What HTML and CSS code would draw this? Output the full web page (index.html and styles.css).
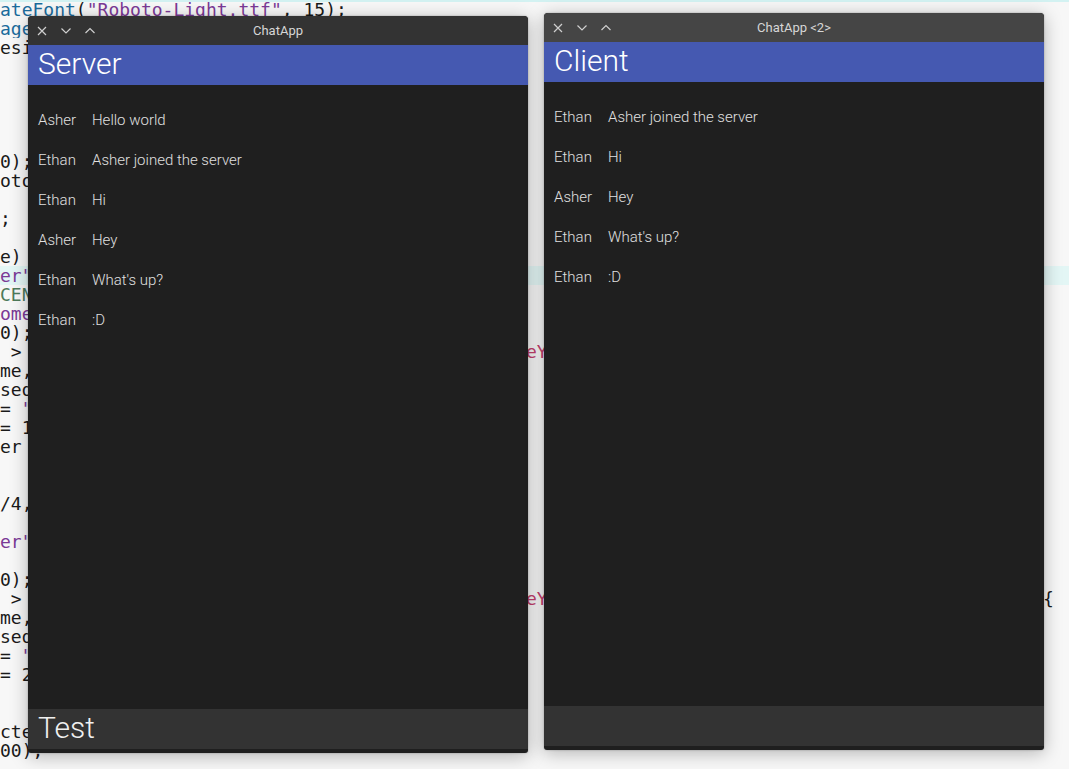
FILE: index.html
```html
<!DOCTYPE html>
<html lang="en">
<head>
<meta charset="utf-8">
<title>ChatApp</title>
<link rel="stylesheet" href="styles.css">
</head>
<body>
<div class="desktop">
  <div class="editor">
    <div class="ln"><span class="c1"><span class="fn">ateFont</span>(<span class="str">"Roboto-Light.ttf"</span>, 15);</span></div>
    <div class="ln"><span class="c1"><span class="fn">age</span>Mode(CORNER);</span></div>
    <div class="ln"><span class="c1">esign();</span></div>
    <div class="ln"></div>
    <div class="ln"></div>
    <div class="ln"></div>
    <div class="ln"></div>
    <div class="ln"></div>
    <div class="ln"><span class="c1">0);</span></div>
    <div class="ln"><span class="c1">oto</span></div>
    <div class="ln"></div>
    <div class="ln"><span class="c1">;</span></div>
    <div class="ln"></div>
    <div class="ln"><span class="c1">e)</span></div>
    <div class="ln hl"><span class="c1"><span class="str">er"</span></span></div>
    <div class="ln"><span class="c1"><span class="cst">CEN</span></span></div>
    <div class="ln"><span class="c1"><span class="str">ome</span></span></div>
    <div class="ln"><span class="c1">0);</span></div>
    <div class="ln"><span class="c1"> &gt;</span><span class="c2"><span class="pk">eY</span></span></div>
    <div class="ln"><span class="c1">me,</span></div>
    <div class="ln"><span class="c1">sed</span></div>
    <div class="ln"><span class="c1">= <span class="str">"</span></span></div>
    <div class="ln"><span class="c1">= 1</span></div>
    <div class="ln"><span class="c1">er</span></div>
    <div class="ln"></div>
    <div class="ln"></div>
    <div class="ln"><span class="c1">/4,</span></div>
    <div class="ln"></div>
    <div class="ln"><span class="c1"><span class="str">er"</span></span></div>
    <div class="ln"></div>
    <div class="ln"><span class="c1">0);</span></div>
    <div class="ln"><span class="c1"> &gt;</span><span class="c2"><span class="pk">eY</span></span><span class="c3">{</span></div>
    <div class="ln"><span class="c1">me,</span></div>
    <div class="ln"><span class="c1">sed</span></div>
    <div class="ln"><span class="c1">= <span class="str">"</span></span></div>
    <div class="ln"><span class="c1">= 2</span></div>
    <div class="ln"></div>
    <div class="ln"></div>
    <div class="ln"><span class="c1">cte</span></div>
    <div class="ln"><span class="c1">00),</span></div>
  </div>

  <section class="window win-server">
    <div class="titlebar">
      <div class="controls">
        <svg class="ico" viewBox="0 0 10 10"><path d="M1 1 L9 9 M9 1 L1 9"/></svg>
        <svg class="ico" viewBox="0 0 10 10"><path d="M0.5 2.5 L5 7 L9.5 2.5"/></svg>
        <svg class="ico" viewBox="0 0 10 10"><path d="M0.5 7 L5 2.5 L9.5 7"/></svg>
      </div>
      <div class="title">ChatApp</div>
      <div></div>
    </div>
    <header class="head">Server</header>
    <div class="messages">
      <div class="msg"><span class="name">Asher</span><span class="text">Hello world</span></div>
      <div class="msg"><span class="name">Ethan</span><span class="text">Asher joined the server</span></div>
      <div class="msg"><span class="name">Ethan</span><span class="text">Hi</span></div>
      <div class="msg"><span class="name">Asher</span><span class="text">Hey</span></div>
      <div class="msg"><span class="name">Ethan</span><span class="text">What's up?</span></div>
      <div class="msg"><span class="name">Ethan</span><span class="text">:D</span></div>
    </div>
    <div class="input">Test</div>
  </section>

  <section class="window win-client active">
    <div class="titlebar">
      <div class="controls">
        <svg class="ico" viewBox="0 0 10 10"><path d="M1 1 L9 9 M9 1 L1 9"/></svg>
        <svg class="ico" viewBox="0 0 10 10"><path d="M0.5 2.5 L5 7 L9.5 2.5"/></svg>
        <svg class="ico" viewBox="0 0 10 10"><path d="M0.5 7 L5 2.5 L9.5 7"/></svg>
      </div>
      <div class="title">ChatApp &lt;2&gt;</div>
      <div></div>
    </div>
    <header class="head">Client</header>
    <div class="messages">
      <div class="msg"><span class="name">Ethan</span><span class="text">Asher joined the server</span></div>
      <div class="msg"><span class="name">Ethan</span><span class="text">Hi</span></div>
      <div class="msg"><span class="name">Asher</span><span class="text">Hey</span></div>
      <div class="msg"><span class="name">Ethan</span><span class="text">What's up?</span></div>
      <div class="msg"><span class="name">Ethan</span><span class="text">:D</span></div>
    </div>
    <div class="input"></div>
  </section>
</div>
</body>
</html>
```

FILE: styles.css
```css
* { box-sizing: border-box; }

html, body {
  margin: 0;
  padding: 0;
  background: #f7f7f7;
}

.desktop {
  position: relative;
  width: 1069px;
  height: 769px;
  overflow: hidden;
  background: linear-gradient(#d3f2f2, #d3f2f2) top left / 100% 2px no-repeat, #f7f7f7;
}

/* background code editor */
.editor {
  font-family: "DejaVu Sans Mono", "Liberation Mono", monospace;
  font-size: 18px;
  line-height: 19px;
  color: #1a1a1a;
}

.ln {
  height: 19px;
  display: flex;
  white-space: pre;
  overflow: hidden;
}

.ln.hl {
  background: #e3f6f5;
}

.c1 { display: inline-block; width: 526px; flex: none; }
.c2 { display: inline-block; width: 517px; flex: none; }
.c3 { display: inline-block; flex: none; }

.fn { color: #1b6b9c; }
.str { color: #7b3a96; }
.cst { color: #4d7a5a; }
.pk { color: #c2406e; }

/* windows */
.window {
  position: absolute;
  width: 500px;
  height: 737px;
  display: flex;
  flex-direction: column;
  background: #1f1f1f;
  border-radius: 4px 4px 3px 3px;
  overflow: hidden;
  padding-bottom: 4px;
  box-shadow: 0 3px 18px rgba(0, 0, 0, 0.28), 0 0 2px rgba(0, 0, 0, 0.3);
  font-family: Roboto, "Noto Sans", sans-serif;
}

.win-server { left: 28px; top: 16px; }
.win-client { left: 544px; top: 13px; }

.titlebar {
  height: 29px;
  flex: none;
  display: grid;
  grid-template-columns: 1fr auto 1fr;
  align-items: center;
  background: #333333;
}

.active .titlebar { background: #454545; }

.controls {
  display: flex;
  align-items: center;
  gap: 14px;
  padding-left: 9px;
}

.ico {
  width: 10px;
  height: 10px;
  fill: none;
  stroke: #cfcfcf;
  stroke-width: 1.2;
}

.title {
  font-size: 13px;
  color: #d6d6d6;
}

.head {
  height: 40px;
  flex: none;
  background: #4559b1;
  color: #ffffff;
  font-size: 30px;
  font-weight: 300;
  line-height: 38px;
  padding-left: 10px;
}

.messages {
  flex: 1;
  padding: 15px 10px 0;
}

.msg {
  height: 40px;
  display: flex;
  align-items: center;
  font-size: 15px;
  font-weight: 300;
  color: #e0e0e0;
}

.name {
  width: 54px;
  flex: none;
}

.input {
  height: 40px;
  flex: none;
  background: #333333;
  color: #f0f0f0;
  font-size: 30px;
  font-weight: 300;
  line-height: 38px;
  padding-left: 10px;
}
```
